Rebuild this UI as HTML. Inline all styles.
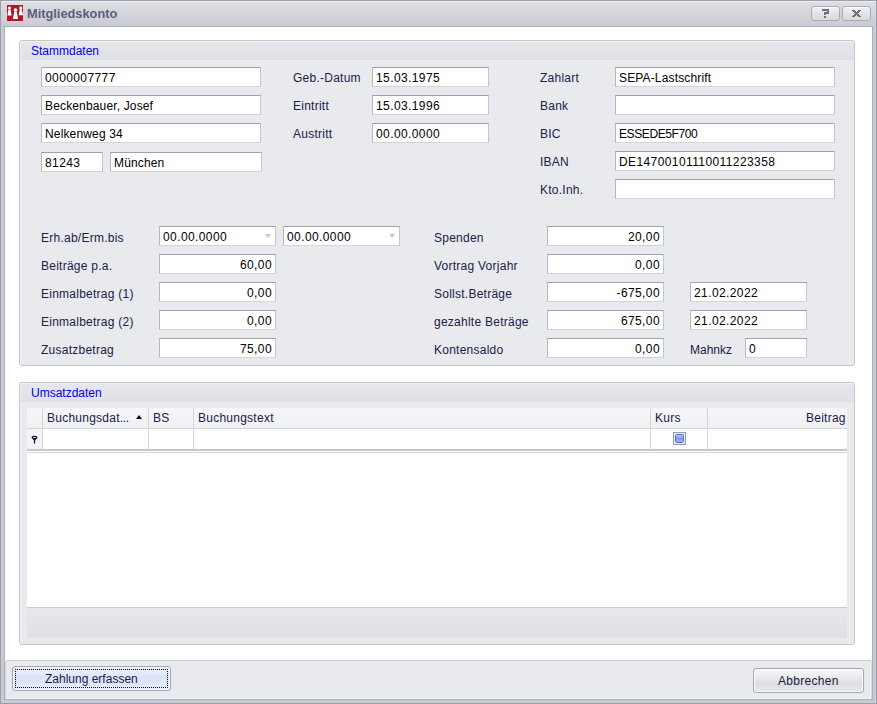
<!DOCTYPE html>
<html><head><meta charset="utf-8">
<style>
*{box-sizing:border-box;margin:0;padding:0}
html,body{width:877px;height:704px;overflow:hidden;background:#c9cbd2}
body{position:relative;font-family:"Liberation Sans",sans-serif;font-size:12px;color:#000}
.a{position:absolute}
#frame{left:0;top:0;width:877px;height:704px;border:1px solid #9c9faa;background:#c9cbd2;box-shadow:inset 0 1px 0 #eceef1}
#title{left:1px;top:2px;width:875px;height:24px;background:linear-gradient(#dddee3,#c9cbd2)}
#client{left:4px;top:26px;width:869px;height:674px;background:#fff;border:1px solid #abaeb8}
.tbtn{position:absolute;width:29px;height:15px;border:1px solid #a9acb6;border-radius:3px;background:linear-gradient(#f2f3f5,#e3e4e8 50%,#d8dadf);box-shadow:inset 0 1px 0 #fafafb}
.grp{position:absolute;left:19px;width:836px;border:1px solid #c3c6cd;border-radius:3px;background:#e9eaee;box-shadow:inset 1px 1px 0 #f2f3f5}
.gh{position:absolute;left:1px;top:1px;width:calc(100% - 1px);height:18px;background:linear-gradient(#e6e7eb,#e0e1e6);border-bottom:1px solid #dcdee2;border-radius:2px 2px 0 0}
.gt{position:absolute;left:10px;top:2px;color:#0000f0;font-size:12px}
.lb{position:absolute;color:#202048;white-space:nowrap;line-height:14px;letter-spacing:0.25px}
.tb{position:absolute;height:20px;background:#fff;border:1px solid #c2c5cc;border-top-color:#9ea2ac;border-left-color:#b6b9c1;border-bottom-color:#d1d3d8;padding-left:3px;padding-top:2px;line-height:17px;letter-spacing:0.15px;white-space:nowrap;overflow:hidden;color:#000}
.n{letter-spacing:0.4px}
.r{text-align:right;padding-right:3px;padding-left:0}
.dd::after{content:"";position:absolute;right:4px;top:7px;border-left:3.5px solid transparent;border-right:3.5px solid transparent;border-top:4px solid #c6c8ce}
.btn{position:absolute;border:1px solid #a5a8b2;border-radius:3px;background:linear-gradient(#f7f7f9,#e9eaee 50%,#dcdee3);text-align:center;line-height:22px;color:#1e1e3c}
</style></head><body>
<div id="frame" class="a"></div>
<div id="title" class="a"></div>
<!-- icon -->
<svg class="a" style="left:7px;top:5px" width="16" height="16" viewBox="0 0 16 16">
<rect width="16" height="16" fill="#b01827"/>
<g fill="#fff">
<circle cx="2.5" cy="3" r="1.6"/><path d="M1.5,4.4 C1.2,6 0.7,8.2 0.5,10.6 L4.5,10.6 C4.3,8.2 3.8,6 3.5,4.4 Z"/>
<circle cx="8.5" cy="5" r="1.8"/><path d="M7.3,6.5 C7,8.5 6.3,11 6,14 L11,14 C10.7,11 10,8.5 9.7,6.5 Z"/>
<circle cx="13.8" cy="2.9" r="1.6"/><path d="M12.8,4.3 C12.5,6 12,8 11.8,10.2 L16,10.2 C15.7,8 15.1,6 14.8,4.3 Z"/>
</g></svg>
<div class="a" style="left:27px;top:6px;font-weight:bold;color:#5b5e7a;font-size:12.8px;line-height:15px;white-space:nowrap">Mitgliedskonto</div>
<div class="tbtn" style="left:811px;top:6px"></div>
<div class="tbtn" style="left:842px;top:6px"></div>
<svg class="a" style="left:0;top:0" width="877" height="26" shape-rendering="crispEdges"><g fill="#6e717d">
<rect x="822" y="9" width="7" height="2"/><rect x="827" y="11" width="2" height="3"/><rect x="824" y="12" width="4" height="2"/><rect x="824" y="14" width="2" height="1"/><rect x="824" y="16" width="2" height="2"/>
<rect x="852" y="10" width="3" height="1"/><rect x="858" y="10" width="3" height="1"/>
<rect x="853" y="11" width="3" height="1"/><rect x="857" y="11" width="3" height="1"/>
<rect x="854" y="12" width="5" height="1"/><rect x="855" y="13" width="3" height="1"/><rect x="854" y="14" width="5" height="1"/>
<rect x="853" y="15" width="3" height="1"/><rect x="857" y="15" width="3" height="1"/>
<rect x="852" y="16" width="3" height="1"/><rect x="858" y="16" width="3" height="1"/>
</g></svg>
<div id="client" class="a"></div>

<!-- Stammdaten -->
<div class="grp" style="top:40px;height:326px">
  <div class="gh"><div class="gt">Stammdaten</div></div>
</div>
<div class="tb n" style="left:41px;top:67px;width:220px">0000007777</div>
<div class="tb" style="left:41px;top:95px;width:220px">Beckenbauer, Josef</div>
<div class="tb" style="left:41px;top:123px;width:220px">Nelkenweg 34</div>
<div class="tb n" style="left:41px;top:152px;width:62px">81243</div>
<div class="tb" style="left:110px;top:152px;width:152px">München</div>

<div class="lb" style="left:293px;top:71px">Geb.-Datum</div>
<div class="lb" style="left:293px;top:99px">Eintritt</div>
<div class="lb" style="left:293px;top:127px">Austritt</div>
<div class="tb n" style="left:372px;top:67px;width:117px">15.03.1975</div>
<div class="tb n" style="left:372px;top:95px;width:117px">15.03.1996</div>
<div class="tb n" style="left:372px;top:123px;width:117px">00.00.0000</div>

<div class="lb" style="left:540px;top:71px">Zahlart</div>
<div class="lb" style="left:540px;top:99px">Bank</div>
<div class="lb" style="left:540px;top:127px">BIC</div>
<div class="lb" style="left:540px;top:155px">IBAN</div>
<div class="lb" style="left:540px;top:183px">Kto.Inh.</div>
<div class="tb" style="left:615px;top:67px;width:220px">SEPA-Lastschrift</div>
<div class="tb" style="left:615px;top:95px;width:220px"></div>
<div class="tb" style="left:615px;top:123px;width:220px;letter-spacing:-0.4px">ESSEDE5F700</div>
<div class="tb n" style="left:615px;top:151px;width:220px">DE14700101110011223358</div>
<div class="tb" style="left:615px;top:179px;width:220px"></div>

<div class="lb" style="left:41px;top:231px">Erh.ab/Erm.bis</div>
<div class="lb" style="left:41px;top:259px">Beiträge p.a.</div>
<div class="lb" style="left:41px;top:287px">Einmalbetrag (1)</div>
<div class="lb" style="left:41px;top:315px">Einmalbetrag (2)</div>
<div class="lb" style="left:41px;top:343px">Zusatzbetrag</div>
<div class="tb dd n" style="left:159px;top:226px;width:117px">00.00.0000</div>
<div class="tb dd n" style="left:283px;top:226px;width:117px">00.00.0000</div>
<div class="tb r n" style="left:159px;top:254px;width:117px">60,00</div>
<div class="tb r n" style="left:159px;top:282px;width:117px">0,00</div>
<div class="tb r n" style="left:159px;top:310px;width:117px">0,00</div>
<div class="tb r n" style="left:159px;top:338px;width:117px">75,00</div>

<div class="lb" style="left:434px;top:231px">Spenden</div>
<div class="lb" style="left:434px;top:259px">Vortrag Vorjahr</div>
<div class="lb" style="left:434px;top:287px">Sollst.Beträge</div>
<div class="lb" style="left:434px;top:315px">gezahlte Beträge</div>
<div class="lb" style="left:434px;top:343px">Kontensaldo</div>
<div class="tb r n" style="left:547px;top:226px;width:117px">20,00</div>
<div class="tb r n" style="left:547px;top:254px;width:117px">0,00</div>
<div class="tb r n" style="left:547px;top:282px;width:117px">-675,00</div>
<div class="tb r n" style="left:547px;top:310px;width:117px">675,00</div>
<div class="tb r n" style="left:547px;top:338px;width:117px">0,00</div>
<div class="tb n" style="left:690px;top:282px;width:117px">21.02.2022</div>
<div class="tb n" style="left:690px;top:310px;width:117px">21.02.2022</div>
<div class="lb" style="left:690px;top:343px;letter-spacing:0">Mahnkz</div>
<div class="tb n" style="left:745px;top:338px;width:62px">0</div>

<!-- Umsatzdaten -->
<div class="grp" style="top:382px;height:263px">
  <div class="gh"><div class="gt">Umsatzdaten</div></div>
</div>

<!-- grid -->
<div class="a" style="left:27px;top:408px;width:820px;height:21px;background:linear-gradient(#f6f6f8,#f0f1f4);border-bottom:1px solid #d3d5dc"></div>
<div class="a" style="left:27px;top:429px;width:820px;height:20px;background:#fff"></div>
<div class="a" style="left:27px;top:429px;width:15px;height:20px;background:#f2f3f6"></div>
<div class="a" style="left:27px;top:449px;width:820px;height:2px;background:#c4c7ce"></div>
<div class="a" style="left:27px;top:451px;width:820px;height:1px;background:#fff"></div>
<div class="a" style="left:27px;top:452px;width:820px;height:1px;background:#d3d5dc"></div>
<div class="a" style="left:27px;top:453px;width:820px;height:154px;background:#fff"></div>
<div class="a" style="left:27px;top:607px;width:820px;height:1px;background:#c8cbd2"></div>
<div class="a" style="left:27px;top:608px;width:820px;height:30px;background:linear-gradient(#e8e8ec,#e0dfe4)"></div>
<!-- column separators -->
<div class="a" style="left:42px;top:408px;width:1px;height:41px;background:#d3d5dc"></div>
<div class="a" style="left:148px;top:408px;width:1px;height:41px;background:#d3d5dc"></div>
<div class="a" style="left:193px;top:408px;width:1px;height:41px;background:#d3d5dc"></div>
<div class="a" style="left:650px;top:408px;width:1px;height:41px;background:#d3d5dc"></div>
<div class="a" style="left:707px;top:408px;width:1px;height:41px;background:#d3d5dc"></div>
<div class="lb" style="left:47px;top:411px">Buchungsdat<span style="letter-spacing:-0.4px">...</span></div>
<div class="a" style="left:136px;top:415px;width:0;height:0;border-left:3.75px solid transparent;border-right:3.75px solid transparent;border-bottom:4px solid #101020"></div>
<div class="lb" style="left:153px;top:411px">BS</div>
<div class="lb" style="left:198px;top:411px">Buchungstext</div>
<div class="lb" style="left:655px;top:411px">Kurs</div>
<div class="lb" style="left:806px;top:411px">Beitrag</div>
<!-- filter icon -->
<svg class="a" style="left:31px;top:435px" width="8" height="10" viewBox="0 0 8 10"><ellipse cx="3.5" cy="2.6" rx="2.3" ry="1.3" fill="none" stroke="#0f0f30" stroke-width="1.3"/><path d="M1.3,3 L5.7,3 L4.1,5.5 L4.1,8.5 L2.9,8.5 L2.9,5.5 Z" fill="#0f0f30"/></svg>
<!-- checkbox -->
<div class="a" style="left:673px;top:432px;width:13px;height:13px;border:1px solid #989ca7;background:#eceef2"></div>
<div class="a" style="left:675px;top:434px;width:9px;height:9px;background:linear-gradient(#b7c9f3,#7d9ae2 50%,#a3b8ef);border:1px solid #4f6fc8;border-radius:1.5px"></div>

<!-- bottom panel -->
<div class="a" style="left:5px;top:660px;width:867px;height:39px;background:#e9eaee;box-shadow:inset -1px -1px 0 #f4f5f7;border-top:1px solid #c5c8cf;border-left:1px solid #d6d8dd;border-right:1px solid #d6d8dd;border-radius:3px 3px 0 0"></div>
<div class="btn" style="left:12px;top:666px;width:159px;height:25px;background:linear-gradient(#f3f5fc,#d9e3fa 45%,#dbe4fa 60%,#e9eefc);border-color:#a3a7b2;box-shadow:inset 0 0 0 1px #f6f8fe"></div>
<div class="a" style="left:15px;top:669px;width:153px;height:19px;border:1px dotted #111"></div>
<div class="lb" style="left:45px;top:672px;color:#1e1e3c;letter-spacing:0">Zahlung erfassen</div>
<div class="btn" style="left:753px;top:668px;width:111px;height:25px;background:linear-gradient(#f9f9fb,#e6e7eb 45%,#dcdee3 60%,#e6e7eb);box-shadow:inset 0 0 0 1px #fbfbfc"></div>
<div class="lb" style="left:778px;top:674px;color:#1e1e3c;letter-spacing:0.3px">Abbrechen</div>
</body></html>
